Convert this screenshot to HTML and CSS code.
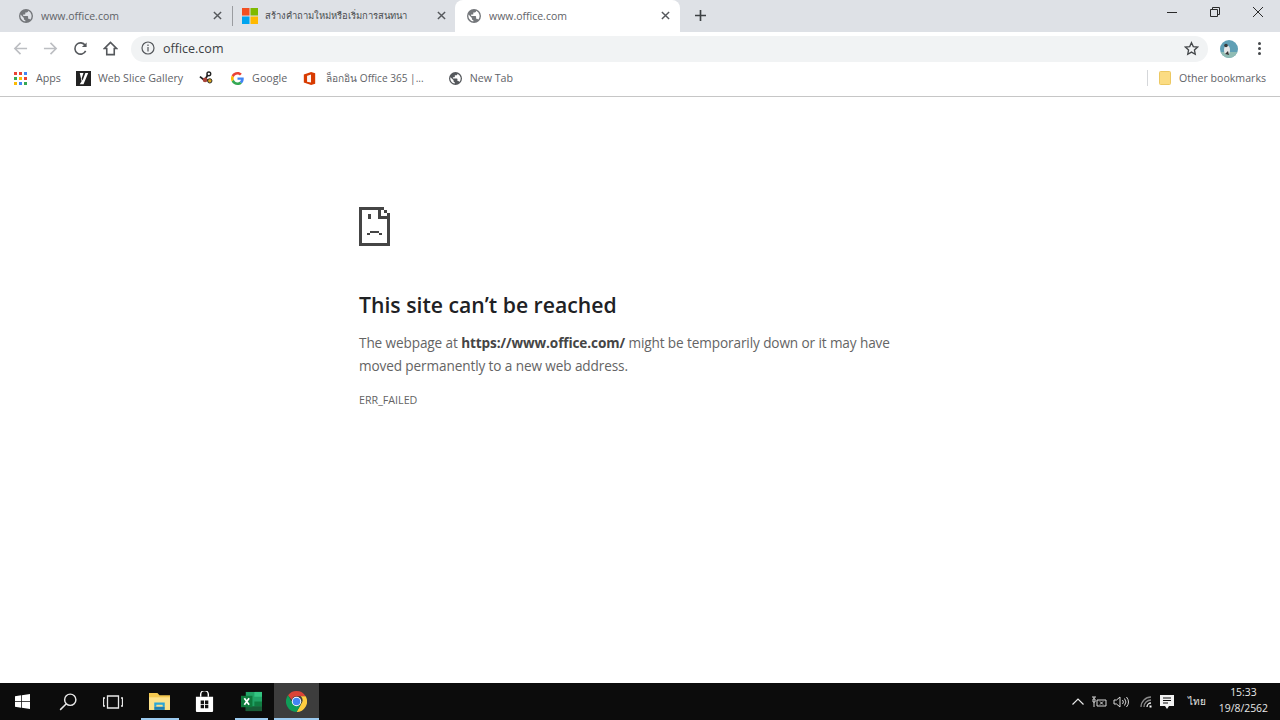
FILE: index.html
```html
<!DOCTYPE html>
<html lang="en">
<head>
  <meta charset="UTF-8">
  <title>www.office.com</title>
  <link rel="stylesheet" href="styles.css">
</head>
<body>
  <div class="tabstrip">
    <div class="tab">
      <svg class="tab-icon" viewBox="0 0 16 16"><use href="#globe"/></svg>
      <span class="tab-title">www.office.com</span>
      <svg class="tab-close" viewBox="0 0 10 10"><path d="M1 1l8 8M9 1l-8 8"/></svg>
    </div>
    <div class="tab-sep"></div>
    <div class="tab tab-ms">
      <svg class="tab-icon-ms" viewBox="0 0 16 16">
        <rect width="7.5" height="7.5" fill="#f25022"/>
        <rect x="8.5" width="7.5" height="7.5" fill="#7fba00"/>
        <rect y="8.5" width="7.5" height="7.5" fill="#00a4ef"/>
        <rect x="8.5" y="8.5" width="7.5" height="7.5" fill="#ffb900"/>
      </svg>
      <span class="tab-title tab-title-th">สร้างคำถามใหม่หรือเริ่มการสนทนา</span>
      <svg class="tab-close" viewBox="0 0 10 10"><path d="M1 1l8 8M9 1l-8 8"/></svg>
    </div>
    <div class="tab tab-active">
      <svg class="tab-icon" viewBox="0 0 16 16"><use href="#globe"/></svg>
      <span class="tab-title">www.office.com</span>
      <svg class="tab-close" viewBox="0 0 10 10"><path d="M1 1l8 8M9 1l-8 8"/></svg>
    </div>
    <svg class="new-tab" viewBox="0 0 12 12"><path d="M6 0v12M0 6h12"/></svg>
    <div class="win-controls">
      <svg class="win-btn" viewBox="0 0 12 12"><path d="M1 6.500h10"/></svg>
      <svg class="win-btn" viewBox="0 0 12 12"><path d="M1.500 3.500h7v7h-7zM3.500 3.500v-2h7v7h-2"/></svg>
      <svg class="win-btn" viewBox="0 0 12 12"><path d="M1 1l10 10M11 1l-10 10"/></svg>
    </div>
  </div>

  <div class="toolbar">
    <svg class="nav-btn nav-off" viewBox="0 0 16 16"><path d="M15 8H2M8 2L2 8l6 6"/></svg>
    <svg class="nav-btn nav-off" viewBox="0 0 16 16"><path d="M1 8h13M8 2l6 6-6 6"/></svg>
    <svg class="nav-btn" viewBox="0 0 16 16"><path d="M13.500 10.500A6 6 0 1 1 13 4.600"/><path class="fill" d="M14.500 1.500v5h-5z"/></svg>
    <svg class="nav-btn" viewBox="0 0 16 16"><path d="M8 1.500L1.500 8H4v6.500h8V8h2.500z"/></svg>
    <div class="omnibox">
      <svg class="info-icon" viewBox="0 0 14 14"><circle cx="7" cy="7" r="6"/><path d="M7 6v4.500M7 3.500v1.500"/></svg>
      <span class="omni-url">office.com</span>
      <svg class="star" viewBox="0 0 16 16"><path d="M8 1.800l1.900 4.200 4.600.5-3.400 3.100.9 4.500-4-2.300-4 2.300.9-4.500L1.500 6.500 6.100 6z"/></svg>
    </div>
    <svg class="avatar" viewBox="0 0 18 18">
      <defs><clipPath id="av"><circle cx="9" cy="9" r="9"/></clipPath></defs>
      <g clip-path="url(#av)">
        <rect width="18" height="18" fill="#5f9fb5"/>
        <rect y="12" width="18" height="6" fill="#8fbcb4"/>
        <ellipse cx="7" cy="10" rx="3" ry="4.500" fill="#e6e6e6"/>
        <circle cx="6" cy="5.500" r="1.800" fill="#3a3a3a"/>
        <path d="M5 14l3-3 1 4z" fill="#333"/>
      </g>
    </svg>
    <div class="menu-dots"><i></i><i></i><i></i></div>
  </div>

  <div class="bookmarks">
    <div class="bm">
      <svg class="bm-apps" viewBox="0 0 13 13">
        <rect width="3" height="3" fill="#ea4335"/><rect x="5" width="3" height="3" fill="#ea4335"/><rect x="10" width="3" height="3" fill="#4285f4"/>
        <rect y="5" width="3" height="3" fill="#34a853"/><rect x="5" y="5" width="3" height="3" fill="#fbbc05"/><rect x="10" y="5" width="3" height="3" fill="#ea4335"/>
        <rect y="10" width="3" height="3" fill="#fbbc05"/><rect x="5" y="10" width="3" height="3" fill="#4285f4"/><rect x="10" y="10" width="3" height="3" fill="#34a853"/>
      </svg>
      <span>Apps</span>
    </div>
    <div class="bm bm-slice">
      <svg class="bm-icon" viewBox="0 0 16 16"><rect width="16" height="16" fill="#222"/><path d="M4 2h4L6 8l1 2 3-8h3l-5 12H4l2-3z" fill="#fff"/></svg>
      <span>Web Slice Gallery</span>
    </div>
    <div class="bm">
      <svg class="bm-icon bm-solo" viewBox="0 0 16 16">
        <path d="M1 6l5 4 4-7M8 9l3 2" fill="none" stroke="#222" stroke-width="2"/>
        <circle cx="6.500" cy="9.500" r="2.500" fill="#a8433a"/><circle cx="10.500" cy="3" r="2" fill="#fff" stroke="#222" stroke-width="1.500"/>
        <circle cx="11.500" cy="10.500" r="2.300" fill="#d9a520" stroke="#222"/>
      </svg>
    </div>
    <div class="bm bm-google">
      <svg class="bm-small" viewBox="0 0 48 48">
        <path fill="#ea4335" d="M24 9.500c3.500 0 6.700 1.300 9.100 3.500l6.800-6.800C35.800 2.400 30.300 0 24 0 14.600 0 6.500 5.400 2.600 13.200l7.900 6.200C12.400 13.700 17.700 9.500 24 9.500z"/>
        <path fill="#4285f4" d="M47 24.500c0-1.600-.1-3.100-.4-4.500H24v9h13c-.6 3-2.300 5.500-4.800 7.200l7.700 6C44.400 38 47 31.800 47 24.500z"/>
        <path fill="#fbbc05" d="M10.500 28.600a14.500 14.500 0 0 1 0-9.200l-7.900-6.200a24 24 0 0 0 0 21.600z"/>
        <path fill="#34a853" d="M24 48c6.500 0 11.900-2.100 15.900-5.800l-7.700-6c-2.200 1.400-4.900 2.300-8.200 2.300-6.300 0-11.600-4.200-13.500-10l-7.900 6.200C6.500 42.600 14.600 48 24 48z"/>
      </svg>
      <span>Google</span>
    </div>
    <div class="bm bm-office">
      <svg class="bm-small bm-office-icon" viewBox="0 0 14 16"><path fill="#d83b01" d="M0 3.200L9 0l5 1.400v13.200L9 16l-9-3z"/><path fill="#fff" d="M3.500 4.800L9 3.200v9.600l-5.500-.9z" opacity=".95"/><path fill="#d83b01" d="M9 2.400l2.500.6v10l-2.500.6z"/><path fill="#d83b01" d="M1 4h3v8.500H1z"/></svg>
      <span class="bm-th">ล็อกอิน Office 365 |...</span>
    </div>
    <div class="bm">
      <svg class="bm-small bm-globe" viewBox="0 0 16 16"><use href="#globe"/></svg>
      <span>New Tab</span>
    </div>
    <div class="bm-right">
      <div class="bm-sep"></div>
      <svg class="bm-folder" viewBox="0 0 12 14"><rect x=".5" y=".5" width="11" height="13" rx="1"/></svg>
      <span>Other bookmarks</span>
    </div>
  </div>

  <div class="page">
    <div class="error">
      <svg class="sad-tab" viewBox="0 0 31 39" shape-rendering="crispEdges">
        <path d="M0 0h19v3H3v33h25V12h3v27H0z"/>
        <path d="M19 0h3v12h-3zM19 9h12v3H19zM22 0h3v3h-3zM25 3h3v3h-3zM28 6h3v3h-3z"/>
        <path d="M9 7h3v5H9zM11 24h9v2h-9zM8 26h3v2H8zM20 26h3v2h-3z"/>
      </svg>
      <h1>This site can’t be reached</h1>
      <p>The webpage at <strong>https://www.office.com/</strong> might be temporarily down or it may have moved permanently to a new web address.</p>
      <div class="err-code">ERR_FAILED</div>
    </div>
  </div>

  <div class="taskbar">
    <div class="task"><svg class="task-win" viewBox="0 0 16 16"><path d="M0 2.300l6.500-.9v6.200H0zM7.300 1.300L16 0v7.600H7.300zM0 8.400h6.500v6.200L0 13.700zM7.300 8.400H16V16l-8.700-1.300z"/></svg></div>
    <div class="task"><svg class="task-line" viewBox="0 0 16 16"><circle cx="10" cy="6" r="5"/><path d="M6.500 9.500L1 15"/></svg></div>
    <div class="task"><svg class="task-line task-view" viewBox="0 0 20 14"><path d="M4.500 1h11v12h-11zM2 3H.5v8H2M18 3h1.500v8H18"/></svg></div>
    <div class="task task-files">
      <svg class="task-app" viewBox="0 0 20 18"><path fill="#f4c84f" d="M0 1h8l2 2h10v14H0z"/><path fill="#fde18a" d="M0 5h20v12H0z"/><path fill="#2aa6d8" d="M5 10h10v4h-2v-2H7v2H5z"/><path fill="#1f7fb5" d="M5 14h10v3H5z"/></svg>
    </div>
    <div class="task"><svg class="task-app" viewBox="0 0 20 22"><path fill="#fff" d="M1 6h18v15a1 1 0 0 1-1 1H2a1 1 0 0 1-1-1z"/><path fill="none" stroke="#fff" stroke-width="1.500" d="M6 6V3.500a4 4 0 0 1 8 0V6"/><path fill="#111" d="M6 10h3.500v3.500H6zM10.500 10H14v3.500h-3.500zM6 14.500h3.500V18H6zM10.500 14.500H14V18h-3.500z"/></svg></div>
    <div class="task task-xl">
      <svg class="task-app" viewBox="0 0 22 20"><path fill="#21a366" d="M5 0h17v20H5z"/><path fill="#33c481" d="M14 0h8v5h-8z"/><path fill="#107c41" d="M14 10h8v5h-8z"/><path fill="#185c37" d="M5 15h17v5H5z"/><path fill="#0e7a3c" d="M0 4h12v12H0z"/><path fill="none" stroke="#fff" stroke-width="1.800" d="M3.500 6.500l5 7M8.500 6.500l-5 7"/></svg>
    </div>
    <div class="task task-chrome">
      <svg class="task-app" viewBox="0 0 20 20">
        <path fill="#db4437" d="M10 0a10 10 0 0 1 8.700 5H10a5 5 0 0 0-4.700 3.300L1.900 4.100A10 10 0 0 1 10 0z"/>
        <path fill="#ffcd40" d="M18.700 5A10 10 0 0 1 10 20l4.300-7.500A5 5 0 0 0 14 5z"/>
        <path fill="#0f9d58" d="M1.900 4.100l4.300 7.400A5 5 0 0 0 14.300 12.500L10 20A10 10 0 0 1 1.900 4.100z"/>
        <circle cx="10" cy="10" r="4.500" fill="#fff"/><circle cx="10" cy="10" r="3.600" fill="#4285f4"/>
      </svg>
    </div>
    <div class="tray">
      <svg class="tray-caret" viewBox="0 0 12 7"><path d="M.5 6.500L6 1l5.500 5.500"/></svg>
      <svg class="tray-net" viewBox="0 0 16 12"><path d="M1 1h4M3 1v2M2 3h2v3H2zM3 6v5M6 4h9v6H6zM9 5.500l3 3M12 5.500l-3 3"/></svg>
      <svg class="tray-vol" viewBox="0 0 16 12"><path d="M1 4h2.500L7 1v10L3.500 8H1zM9.500 4a3 3 0 0 1 0 4M11.500 2.500a5.500 5.500 0 0 1 0 7M13.500 1a8 8 0 0 1 0 10"/></svg>
      <svg class="tray-wifi" viewBox="0 0 14 12"><path class="dim" d="M1 11a10 10 0 0 1 10-10M4 11a7 7 0 0 1 7-7"/><path d="M7 11a4 4 0 0 1 4-4"/><path class="dot" d="M9.500 9.500h2v2h-2z"/></svg>
      <svg class="tray-msg" viewBox="0 0 14 14"><path d="M0 0h14v11H9l-2 3-2-3H0z"/><path class="gap" d="M3 3h8M3 5.500h8M3 8h5"/></svg>
      <span class="tray-lang">ไทย</span>
      <div class="clock"><span>15:33</span><span>19/8/2562</span></div>
    </div>
  </div>

  <svg class="sprites" width="0" height="0">
    <symbol id="globe" viewBox="0 0 16 16">
      <path fill="currentColor" d="M8 0a8 8 0 1 0 0 16A8 8 0 0 0 8 0zM7.200 14.300A6.400 6.400 0 0 1 1.800 6.400L5.600 10.200v.8c0 .9.700 1.600 1.600 1.600zm5.500-2a1.600 1.600 0 0 0-1.500-1.100h-.8V8.800a.8.800 0 0 0-.8-.8H4.800V6.400h1.600a.8.800 0 0 0 .8-.8V4h1.600c.9 0 1.600-.7 1.600-1.600v-.3a6.400 6.400 0 0 1 2.300 10.200z"/>
    </symbol>
  </svg>
</body>
</html>
```

FILE: styles.css
```css
html, body {
  margin: 0;
  height: 100%;
}
body {
  display: flex;
  flex-direction: column;
  width: 1280px;
  height: 720px;
  overflow: hidden;
  background: #fff;
  font-family: "Open Sans", "Noto Sans", "Noto Sans CJK SC", sans-serif;
  color: #5f6368;
}
.sprites {
  display: none;
}

/* tab strip */
.tabstrip {
  display: flex;
  align-items: flex-start;
  height: 32px;
  background: #dee1e6;
  flex: none;
}
.tab {
  display: flex;
  align-items: center;
  width: 232px;
  height: 31px;
  padding: 0 9px 0 19px;
  box-sizing: border-box;
  color: #5f6368;
}
.tab-ms {
  width: 222px;
  padding: 0 8px 0 9px;
}
.tab-active {
  width: 225px;
  height: 36px;
  padding-left: 12px;
  padding-bottom: 5px;
  background: #fff;
  border-radius: 8px 8px 0 0;
}
.tab-sep {
  width: 1px;
  height: 20px;
  margin-top: 6px;
  background: #9a9ca0;
}
.tab-icon {
  width: 14px;
  height: 14px;
  margin-right: 8px;
  color: #74777b;
}
.tab-icon-ms {
  width: 16px;
  height: 16px;
  margin-right: 7px;
}
.tab-title {
  flex: 1;
  font-size: 10.5px;
  white-space: nowrap;
  overflow: hidden;
}
.tab-title-th {
  font-size: 9.45px;
  color: #4a4c50;
}
.tab-close {
  width: 9px;
  height: 9px;
  margin-right: 1px;
  fill: none;
  stroke: #55585c;
  stroke-width: 1.600;
}
.new-tab {
  width: 11px;
  height: 11px;
  margin: 10px 0 0 15px;
  fill: none;
  stroke: #3c4043;
  stroke-width: 1.800;
}
.win-controls {
  display: flex;
  gap: 31px;
  margin-left: auto;
  padding: 6px 16px 0 0;
}
.win-btn {
  width: 12px;
  height: 12px;
  fill: none;
  stroke: #2a2a2a;
  stroke-width: 1;
}

/* toolbar */
.toolbar {
  display: flex;
  align-items: center;
  height: 32px;
  padding: 2px 0 0 13px;
  box-sizing: border-box;
  flex: none;
}
.nav-btn {
  width: 15px;
  height: 15px;
  margin: 0 15px 2px 0;
  fill: none;
  stroke: #55585c;
  stroke-width: 1.700;
}
.nav-btn .fill {
  fill: #55585c;
  stroke: none;
}
.nav-off {
  stroke: #bcbec2;
}
.omnibox {
  display: flex;
  align-items: center;
  width: 1077px;
  height: 26px;
  margin-left: -2px;
  padding: 0 9px 2px 10px;
  box-sizing: border-box;
  background: #f1f3f4;
  border-radius: 13px;
}
.info-icon {
  width: 14px;
  height: 14px;
  margin-right: 8px;
  fill: none;
  stroke: #55585c;
  stroke-width: 1.200;
}
.omni-url {
  flex: 1;
  font-size: 12.5px;
  color: #3c4043;
}
.star {
  width: 15px;
  height: 15px;
  fill: none;
  stroke: #44474a;
  stroke-width: 1.400;
}
.avatar {
  width: 18px;
  height: 18px;
  margin: 0 0 1px 12px;
}
.menu-dots {
  display: flex;
  flex-direction: column;
  gap: 2px;
  margin: 0 0 1px 20px;
}
.menu-dots i {
  width: 3px;
  height: 3px;
  border-radius: 50%;
  background: #44474a;
}

/* bookmarks */
.bookmarks {
  display: flex;
  align-items: center;
  height: 33px;
  padding: 0 0 4px 14px;
  border-bottom: 1px solid #c6c6c6;
  box-sizing: border-box;
  font-size: 10.7px;
  flex: none;
}
.bm {
  display: flex;
  align-items: center;
  margin-right: 15px;
}
.bm span {
  white-space: nowrap;
}
.bm-slice {
  margin-right: 16px;
}
.bm-google {
  margin-right: 16px;
}
.bm-apps {
  width: 13px;
  height: 13px;
  margin-right: 9px;
}
.bm-icon {
  width: 15px;
  height: 15px;
  margin-right: 7px;
}
.bm-solo {
  margin-right: 2px;
}
.bm-small {
  width: 13px;
  height: 13px;
  margin-right: 8px;
}
.bm-office {
  margin-right: 25px;
}
.bm-office-icon {
  margin-right: 10px;
}
.bm-th {
  font-size: 10.1px;
}
.bm-globe {
  color: #55585c;
}
.bm-right {
  display: flex;
  align-items: center;
  margin-left: auto;
  padding-right: 14px;
  font-size: 10.6px;
}
.bm-sep {
  width: 1px;
  height: 16px;
  margin-right: 11px;
  background: #d5d7da;
}
.bm-folder {
  width: 12px;
  height: 14px;
  margin-right: 8px;
  fill: #fbdc83;
  stroke: #ecc862;
}

/* error page */
.page {
  flex: 1;
  padding: 110px 0 0 359px;
}
.error {
  width: 540px;
}
.sad-tab {
  display: block;
  width: 31px;
  height: 39px;
  fill: #454545;
}
h1 {
  margin: 45px 0 0;
  font-size: 21.2px;
  line-height: 28px;
  font-weight: 600;
  color: #202124;
}
p {
  margin: 13px 0 0;
  font-size: 13.6px;
  letter-spacing: -0.11px;
  line-height: 22.5px;
  color: #646464;
}
strong {
  color: #454545;
}
.err-code {
  margin-top: 15px;
  font-size: 10.7px;
  line-height: 16px;
  color: #646464;
}

/* taskbar */
.taskbar {
  display: flex;
  height: 37px;
  background: #0c0c0c;
  flex: none;
}
.task {
  display: flex;
  align-items: center;
  justify-content: center;
  width: 45px;
  height: 37px;
}
.task-files {
  margin-left: 2px;
  background: linear-gradient(#9ccbf0, #9ccbf0) center bottom / 38px 2px no-repeat;
}
.task-xl {
  margin-left: 2px;
  background: linear-gradient(#9ccbf0, #9ccbf0) center bottom / 33px 2px no-repeat;
}
.task-chrome {
  background: linear-gradient(#9ccbf0, #9ccbf0) center bottom / 100% 2px no-repeat, #3d3d3d;
}
.task-win {
  width: 15px;
  height: 15px;
  fill: #fff;
}
.task-line {
  width: 18px;
  height: 18px;
  fill: none;
  stroke: #e8e8e8;
  stroke-width: 1.300;
}
.task-view {
  width: 20px;
  height: 14px;
}
.task-app {
  width: 21px;
  height: 21px;
}
.tray {
  display: flex;
  align-items: center;
  margin-left: auto;
  padding-right: 12px;
  color: #e8e8e8;
}
.tray-caret {
  width: 12px;
  height: 7px;
  margin-right: 7px;
  fill: none;
  stroke: #e8e8e8;
  stroke-width: 1.200;
}
.tray-net,
.tray-vol {
  width: 16px;
  height: 12px;
  fill: none;
  stroke: #d8d8d8;
}
.tray-net {
  margin-right: 6px;
}
.tray-vol {
  margin-right: 11px;
}
.tray-wifi {
  width: 14px;
  height: 12px;
  margin-right: 6px;
  fill: none;
  stroke: #e8e8e8;
  stroke-width: 1.300;
}
.tray-wifi .dim {
  stroke: #8a8a8a;
}
.tray-wifi .dot {
  fill: #fff;
  stroke: none;
}
.tray-msg {
  width: 14px;
  height: 14px;
  fill: #f2f2f2;
}
.tray-msg .gap {
  fill: none;
  stroke: #0c0c0c;
}
.tray-lang {
  margin-left: 14px;
  font-size: 10px;
}
.clock {
  display: flex;
  flex-direction: column;
  align-items: center;
  margin: -3px 0 0 13px;
  font-size: 10.4px;
  line-height: 16px;
}
```
